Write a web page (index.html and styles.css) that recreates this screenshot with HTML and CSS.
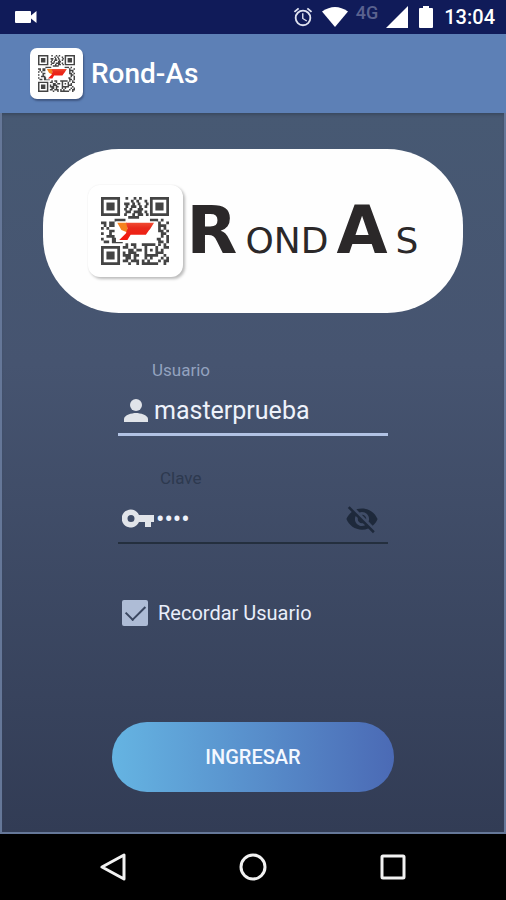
FILE: index.html
```html
<!DOCTYPE html>
<html lang="es">
<head>
    <meta charset="UTF-8">
    <meta name="viewport" content="width=device-width, initial-scale=1.0">
    <title>Rond-As</title>
    <link rel="stylesheet" href="styles.css">
</head>
<body>
    <!-- QR logo, used in the app bar and in the card -->
    <svg class="defs" aria-hidden="true">
        <defs>
            <linearGradient id="flame" x1="0" y1="0" x2="0" y2="1">
                <stop offset="0" stop-color="#f04b32"/>
                <stop offset="0.3" stop-color="#e82a1c"/>
                <stop offset="1" stop-color="#f5160c"/>
            </linearGradient>
            <symbol id="qr" viewBox="0 0 25 25">
                <g fill="none" stroke="#444">
                    <path d="M.5.5h6v6h-6zM18.5.5h6v6h-6zM.5 18.5h6v6h-6z"/>
                    <path d="M9 .5h1m2 0h1m1 0h1M11 1.5h1m1 0h1m2 0h1M8.500 2.500h2m1 0h1m1 0h1m2 0h1M9 3.500h1m1 0h2m1 0h1m1 0h1M8.500 4.500h1m1 0h1m2 0h2M9 5.500h2m1 0h3m1 0h1M8.500 6.500h1m2 0h1m1 0h2m1 0h1M10 7.500h4"/>
                    <path d="M5 8.500h4m9 0h3m1 0h1M0 9.500h2m1 0h2m16 0h1m2 0h1M1 10.500h1m1 0h2m16 0h3M0 11.500h1m1 0h1m18 0h1m1 0h1M3 12.500h2m16 0h2m1 0h1M0 13.500h1m2 0h1m18 0h2M2 14.500h3m17 0h1m1 0h1M0 15.500h1m3 0h2m14 0h2m2 0h1M1 16.500h2m1 0h4m13 0h2m1 0h1"/>
                    <path d="M9 17.500h1m1 0h2m2 0h5m1 0h1m1 0h1M8 18.500h2m2 0h1m3 0h1m3 0h1m2 0h2M10 19.500h2m1 0h2m1 0h1m1 0h1m1 0h1m1 0h1M8 20.500h1m1 0h3m3 0h1m3 0h3M8 21.500h3m1 0h2m2 0h5m2 0h1M9 22.500h2m1 0h1m3 0h1m1 0h1m3 0h1m1 0h1M8 23.500h2m1 0h3m1 0h1m1 0h1m3 0h1m1 0h2M10 24.500h1m2 0h1m1 0h6m2 0h1"/>
                </g>
                <path fill="#444" d="M2 2h3v3H2zM20 2h3v3h-3zM2 20h3v3H2z"/>
                <path fill="#fff" d="M5.500 9h15v7.500h-15z"/>
                <path fill="#f5821f" d="M6 9.500h3.500l.5 3.600-2.500-1z"/>
                <path fill="url(#flame)" d="M9.200 9.500h10.300L17.900 12H9.900zM9.600 11.900h8.300l-1.400 2h-5.600l-1.200 1.900H6.700l2.500-2.500z"/>
            </symbol>
        </defs>
    </svg>

    <div class="status-bar">
        <svg class="icon-camera" viewBox="0 0 24 14" fill="#fff"><path d="M2 1h14q1 0 1 1v3.500L22.500 1v12L17 8.500V12q0 1-1 1H2q-1 0-1-1V2q0-1 1-1z"/></svg>
        <div class="status-icons">
            <svg width="22" height="22" viewBox="0 0 24 24" fill="#dfe2f0"><path d="M22 5.700l-4.600-3.900-1.300 1.500 4.600 3.900L22 5.700zM7.900 3.400L6.600 1.900 2 5.700l1.300 1.500 4.600-3.800zM12.500 8H11v6l4.700 2.900.8-1.200-4-2.400V8zM12 4a9 9 0 1 0 0 18 9 9 0 0 0 0-18zm0 16a7 7 0 1 1 0-14 7 7 0 0 1 0 14z"/></svg>
            <svg width="26" height="20" viewBox="0 0 26 20" fill="#fff"><path d="M13 20L0 4.500Q13-4.500 26 4.500z"/></svg>
            <span class="network">4G</span>
            <svg width="22" height="22" viewBox="0 0 22 22" fill="#fff"><path d="M22 0v22H0z"/></svg>
            <svg class="icon-battery" viewBox="0 0 14 22" fill="#fff"><path d="M4 0h6v2h3q1 0 1 1v18q0 1-1 1H1q-1 0-1-1V3q0-1 1-1h3z"/></svg>
            <span class="clock">13:04</span>
        </div>
    </div>

    <header class="app-bar">
        <div class="app-icon"><svg><use href="#qr"/></svg></div>
        <h1>Rond-As</h1>
    </header>

    <main>
        <div class="logo-card">
            <div class="logo-icon"><svg><use href="#qr"/></svg></div>
            <div class="wordmark"><span class="big">R</span><span>OND</span><span class="big">A</span><span>S</span></div>
        </div>

        <form>
            <div class="field">
                <label for="usuario">Usuario</label>
                <div class="field-row">
                    <svg class="icon-user" viewBox="0 0 24 24" fill="#e1e4e9"><circle cx="12" cy="6" r="6"/><path d="M0 23v-3c0-4 8-6 12-6s12 2 12 6v3z"/></svg>
                    <input type="text" id="usuario" value="masterprueba">
                </div>
            </div>
            <div class="field field-pass">
                <label for="clave">Clave</label>
                <div class="field-row">
                    <svg class="icon-key" viewBox="0 0 32 20" fill="#e1e4e9"><path fill-rule="evenodd" d="M17 6A9 9 0 1 0 17 13h6v5h6v-5h3V6zM9 6a3.500 3.500 0 1 1 0 7 3.500 3.500 0 0 1 0-7z"/></svg>
                    <input type="password" id="clave" value="1234">
                    <button type="button" class="toggle" aria-label="Mostrar clave">
                        <svg width="34" height="34" viewBox="0 0 24 24" fill="#1e293b"><path d="M12 7c2.760 0 5 2.240 5 5 0 .65-.13 1.260-.36 1.830l2.920 2.920c1.510-1.260 2.700-2.890 3.430-4.750-1.730-4.390-6-7.500-11-7.500-1.400 0-2.740.25-3.980.7l2.160 2.160C10.740 7.130 11.350 7 12 7zM2 4.270l2.280 2.280.46.46C3.080 8.300 1.780 10.020 1 12c1.730 4.390 6 7.500 11 7.500 1.550 0 3.030-.3 4.380-.84l.42.42L19.730 22 21 20.730 3.270 3 2 4.270zM7.530 9.800l1.550 1.550c-.05.21-.08.43-.08.65 0 1.660 1.340 3 3 3 .22 0 .44-.03.65-.08l1.550 1.550c-.67.33-1.410.53-2.200.53-2.760 0-5-2.240-5-5 0-.79.2-1.530.53-2.200zm4.310-.78l3.150 3.150.02-.16c0-1.660-1.340-3-3-3l-.17.01z"/></svg>
                    </button>
                </div>
            </div>
            <label class="remember"><input type="checkbox" checked>Recordar Usuario</label>
            <button type="submit" class="submit">INGRESAR</button>
        </form>
    </main>

    <nav class="nav-bar">
        <button aria-label="Atrás"><svg width="28" height="28" viewBox="0 0 28 28"><path d="M25 2v24L3 14z"/></svg></button>
        <button aria-label="Inicio"><svg width="28" height="28" viewBox="0 0 28 28"><circle cx="14" cy="14" r="12"/></svg></button>
        <button aria-label="Recientes"><svg width="28" height="28" viewBox="0 0 28 28"><rect x="3" y="3" width="22" height="22" rx="1"/></svg></button>
    </nav>
</body>
</html>
```
FILE: styles.css
```css
* { box-sizing: border-box; }
body { margin: 0; min-height: 100vh; display: flex; flex-direction: column; font-family: Roboto, sans-serif; color: #fff; background: #000; }
svg { display: block; flex: none; }
button, input { font-family: inherit; color: inherit; }
button { border: 0; padding: 0; background: none; cursor: pointer; }
.defs { position: absolute; width: 0; height: 0; }

.status-bar { height: 34px; padding: 0 11px 0 14px; display: flex; align-items: center; justify-content: space-between; background: #101b59; }
.icon-camera { width: 24px; height: 14px; }
.status-icons { display: flex; align-items: center; gap: 8px; }
.network { font-size: 18px; font-weight: 500; line-height: 18px; color: #5a628f; padding-bottom: 8px; }
.icon-battery { width: 14px; height: 22px; margin: 0 3px; }
.clock { font-size: 20px; font-weight: 500; }

.app-bar { height: 79px; padding: 0 30px; display: flex; align-items: center; gap: 8px; background: #5d80b6; }
.app-icon { width: 53px; height: 51px; border-radius: 7px; display: flex; align-items: center; justify-content: center; background: #fff; box-shadow: 1px 2px 2px #3f5682; }
.app-icon svg { width: 37px; height: 37px; }
h1 { margin: 0; font-size: 28px; font-weight: 500; }

main { flex: 1; padding: 36px 41px 40px; border: 2px solid #657798; border-top: 0; background: linear-gradient(#475973, #465470 35%, #323c55); box-shadow: inset 0 3px 3px -1px #3b4a5f; }
.logo-card { height: 164px; border-radius: 76px; display: flex; align-items: center; justify-content: center; gap: 4px; background: #fefefe; }
.logo-icon { width: 95px; height: 92px; border-radius: 12px; display: flex; align-items: center; justify-content: center; background: #fff; box-shadow: 2px 2px 3px #bbb, 0 0 2px #eee; }
.logo-icon svg { width: 68px; height: 68px; }
.wordmark { padding-top: 10px; display: flex; align-items: baseline; gap: 8px; font-family: "DejaVu Sans", sans-serif; font-size: 36px; line-height: 80px; color: #2b2829; }
.wordmark .big { font-size: 66px; font-weight: bold; }

form { display: flex; flex-direction: column; align-items: center; padding-top: 45px; }
.field { width: 270px; margin-bottom: 30px; }
.field > label { display: block; padding-left: 34px; font-size: 17px; line-height: 24px; color: #93a2bf; }
.field-row { height: 54px; padding: 6px 4px 0; display: flex; align-items: center; border-bottom: 3px solid #b2c3e4; }
.field-row input { flex: 1; min-width: 0; border: 0; outline: 0; padding: 0; background: none; font-size: 25px; color: #eef2fb; }
.icon-user { width: 24px; height: 24px; margin: 0 6px 0 2px; }
.icon-key { width: 32px; height: 20px; margin-right: 2px; }
.field-pass > label { padding-left: 42px; color: #2d394f; }
.field-pass .field-row { border-bottom: 2px solid #242f3e; }
.toggle { margin-right: 5px; }

.remember { width: 262px; margin-top: 26px; display: flex; align-items: center; gap: 10px; font-size: 20px; line-height: 26px; color: #e9eefa; }
.remember input { appearance: none; width: 26px; height: 26px; margin: 0; border-radius: 2px; display: flex; align-items: center; justify-content: center; background: #aebcd6; }
.remember input:checked::after { content: ""; width: 9px; height: 17px; margin-bottom: 5px; border: solid #3a4760; border-width: 0 2px 2px 0; transform: rotate(45deg); }
.submit { width: 282px; height: 70px; margin-top: 96px; border-radius: 35px; font-size: 20px; font-weight: 500; color: #f4f8ff; background: linear-gradient(90deg, #65b4e2, #4b6ab5); }

.nav-bar { height: 67px; padding: 0 43px 2px; display: flex; align-items: center; justify-content: space-around; background: #000; }
.nav-bar svg { fill: none; stroke: #f2f2f2; stroke-width: 3; stroke-linejoin: round; }
```
